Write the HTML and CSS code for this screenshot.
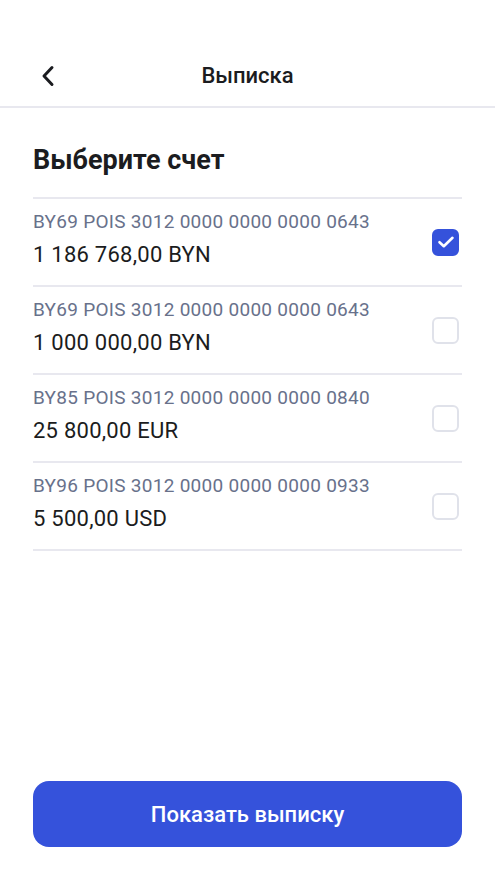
FILE: index.html
```html
<!DOCTYPE html>
<html lang="ru">
<head>
<meta charset="utf-8">
<title>Выписка</title>
<link rel="stylesheet" href="styles.css">
</head>
<body>
<div class="screen">
  <header class="header">
    <button class="back" aria-label="Назад">
      <svg width="16" height="22" viewBox="0 0 16 22"><path d="M12 2.5 L4 11 L12 19.5" fill="none" stroke="#1b1c20" stroke-width="3" stroke-linecap="round" stroke-linejoin="round"/></svg>
    </button>
    <h1 class="title">Выписка</h1>
  </header>
  <main class="content">
    <h2 class="heading">Выберите счет</h2>
    <ul class="accounts">
      <li class="account">
        <div class="info">
          <div class="iban">BY69 POIS 3012 0000 0000 0000 0643</div>
          <div class="amount">1 186 768,00 BYN</div>
        </div>
        <span class="check checked">
          <svg width="18" height="14" viewBox="0 0 18 14"><path d="M2.5 7.2 L6.8 11.2 L15.5 2.8" fill="none" stroke="#fff" stroke-width="2.6" stroke-linecap="round" stroke-linejoin="round"/></svg>
        </span>
      </li>
      <li class="account">
        <div class="info">
          <div class="iban">BY69 POIS 3012 0000 0000 0000 0643</div>
          <div class="amount">1 000 000,00 BYN</div>
        </div>
        <span class="check"></span>
      </li>
      <li class="account">
        <div class="info">
          <div class="iban">BY85 POIS 3012 0000 0000 0000 0840</div>
          <div class="amount">25 800,00 EUR</div>
        </div>
        <span class="check"></span>
      </li>
      <li class="account">
        <div class="info">
          <div class="iban">BY96 POIS 3012 0000 0000 0000 0933</div>
          <div class="amount">5 500,00 USD</div>
        </div>
        <span class="check"></span>
      </li>
    </ul>
  </main>
  <footer class="footer">
    <button class="primary">Показать выписку</button>
  </footer>
</div>
</body>
</html>
```
FILE: styles.css
```css
* { box-sizing: border-box; }
html, body { margin: 0; padding: 0; background: #fff; }
body {
  font-family: Roboto, "Noto Sans", Arial, sans-serif;
  color: #1b1c20;
}
.screen {
  height: 880px;
  display: flex;
  flex-direction: column;
}
.header {
  height: 108px;
  padding-top: 44px;
  border-bottom: 2px solid #e8e8ef;
  display: flex;
  align-items: flex-start;
  justify-content: center;
  position: relative;
}
.back {
  position: absolute;
  left: 40px;
  top: 65px;
  border: 0;
  background: none;
  padding: 0;
  width: 16px;
  height: 22px;
  display: flex;
}
.title {
  margin: 0;
  height: 64px;
  line-height: 64px;
  font-size: 22px;
  font-weight: 500;
}
.content {
  padding: 0 33px;
}
.heading {
  margin: 36px 0 21px;
  font-size: 27px;
  line-height: 32px;
  font-weight: 700;
}
.accounts {
  list-style: none;
  margin: 0;
  padding: 0;
  border-top: 2px solid #e8e8ef;
}
.account {
  height: 88px;
  border-bottom: 2px solid #e8e8ef;
  display: flex;
  align-items: center;
  justify-content: space-between;
}
.info {
  display: flex;
  flex-direction: column;
  gap: 9px;
  margin-bottom: 5px;
}
.iban {
  font-size: 19px;
  line-height: 22px;
  color: #68718b;
  letter-spacing: 0.28px;
}
.amount {
  font-size: 22px;
  line-height: 26px;
  color: #1b1c20;
  letter-spacing: 0.25px;
}
.check {
  width: 27px;
  height: 27px;
  border-radius: 6px;
  border: 2px solid #e0e2ea;
  margin-right: 3px;
  display: flex;
  align-items: center;
  justify-content: center;
}
.check.checked {
  background: #3552db;
  border-color: #3552db;
}
.footer {
  margin-top: auto;
  padding: 0 33px 33px;
}
.primary {
  width: 100%;
  height: 66px;
  border: 0;
  border-radius: 16px;
  background: #3552db;
  color: #fff;
  font-family: Roboto, "Noto Sans", Arial, sans-serif;
  font-size: 22px;
  font-weight: 500;
}
```
